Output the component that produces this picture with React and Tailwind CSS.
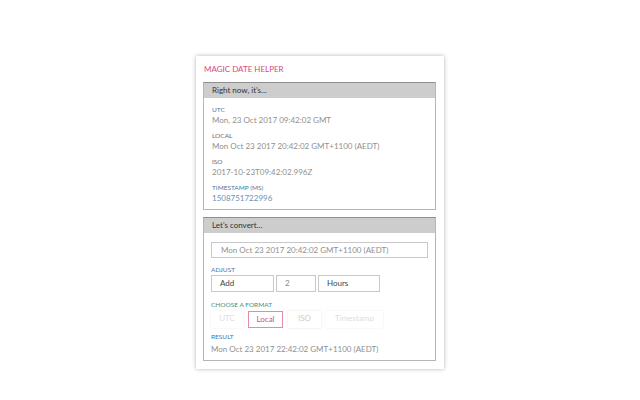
import React from 'react'

function Field({ label, labelColor, value, valueColor = 'text-[#8f8f8f]' }) {
  return (
    <div className="h-[26px]">
      <div className={`text-[6.5px] leading-[9px] uppercase ${labelColor}`}>{label}</div>
      <div className={`text-[8px] leading-[12px] whitespace-nowrap ${valueColor}`}>{value}</div>
    </div>
  )
}

function Section({ title, children, className }) {
  return (
    <div className={`border border-[#b5b5b5] border-t-[#8f8f8f] ${className}`}>
      <div className="h-[15px] bg-[#cdcdcd] pl-2 text-[8px] leading-[15px] text-[#333]">{title}</div>
      {children}
    </div>
  )
}

export default function App() {
  return (
    <div className="w-[640px] h-[400px] bg-white pt-[56px] pl-[196px]" style={{ fontFamily: 'Lato, sans-serif' }}>
      <div className="w-[248px] h-[313px] bg-white shadow-[0_0_4px_rgba(0,0,0,0.3)] pl-[7px] pr-2 pt-2">
        <div className="pl-px text-[8px] leading-[10px] text-[#d9487a] uppercase mb-2">Magic Date Helper</div>
        <Section title="Right now, it's..." className="h-[128px]">
          <div className="pl-2 pt-[7px] flex flex-col">
            <Field label="UTC" labelColor="text-[#3f78a8]" value="Mon, 23 Oct 2017 09:42:02 GMT" />
            <Field label="Local" labelColor="text-[#666]" value="Mon Oct 23 2017 20:42:02 GMT+1100 (AEDT)" />
            <Field label="ISO" labelColor="text-[#666]" value="2017-10-23T09:42:02.996Z" />
            <Field label="Timestamp (ms)" labelColor="text-[#3f78a8]" value="1508751722996" valueColor="text-[#6d8fb0]" />
          </div>
        </Section>
        <Section title="Let's convert..." className="h-[144px] mt-[7px]">
          <div className="px-[7px] pt-[9px]">
            <div className="h-[16px] border border-[#c8c8c8] pl-[9px] text-[8px] leading-[14px] text-[#8f8f8f] whitespace-nowrap">
              Mon Oct 23 2017 20:42:02 GMT+1100 (AEDT)
            </div>
            <div className="mt-[7px] text-[6.5px] leading-[9px] uppercase text-[#3f78a8]">Adjust</div>
            <div className="flex gap-[2px] mt-[1px] text-[8px]">
              <div className="w-[63px] h-[17px] border border-[#c8c8c8] pl-2 leading-[15px] text-[#444]">Add</div>
              <div className="w-[40px] h-[17px] border border-[#c8c8c8] pl-2 leading-[15px] text-[#888]">2</div>
              <div className="w-[62px] h-[17px] border border-[#c8c8c8] pl-2 leading-[15px] text-[#444]">Hours</div>
            </div>
            <div className="mt-[8px] text-[6.5px] leading-[9px] uppercase text-[#3f8f78]">Choose a format</div>
            <div className="flex gap-[5px] mt-[2px] text-[8px] leading-[15px]">
              <div className="w-[32px] h-[17px] text-center text-[#ddd] shadow-[0_0_2px_rgba(0,0,0,0.08)]">UTC</div>
              <div className="w-[35px] h-[17px] text-center border border-[#e58aa8] text-[#c9527c]">Local</div>
              <div className="w-[33px] h-[17px] text-center text-[#ccc] shadow-[0_0_2px_rgba(0,0,0,0.12)]">ISO</div>
              <div className="w-[57px] h-[17px] text-center text-[#ddd] shadow-[0_0_2px_rgba(0,0,0,0.08)]">Timestamp</div>
            </div>
            <div className="mt-[4px] text-[6.5px] leading-[9px] uppercase text-[#3f78a8]">Result</div>
            <div className="mt-[2px] text-[8px] leading-[12px] text-[#8f8f8f] whitespace-nowrap">Mon Oct 23 2017 22:42:02 GMT+1100 (AEDT)</div>
          </div>
        </Section>
      </div>
    </div>
  )
}
